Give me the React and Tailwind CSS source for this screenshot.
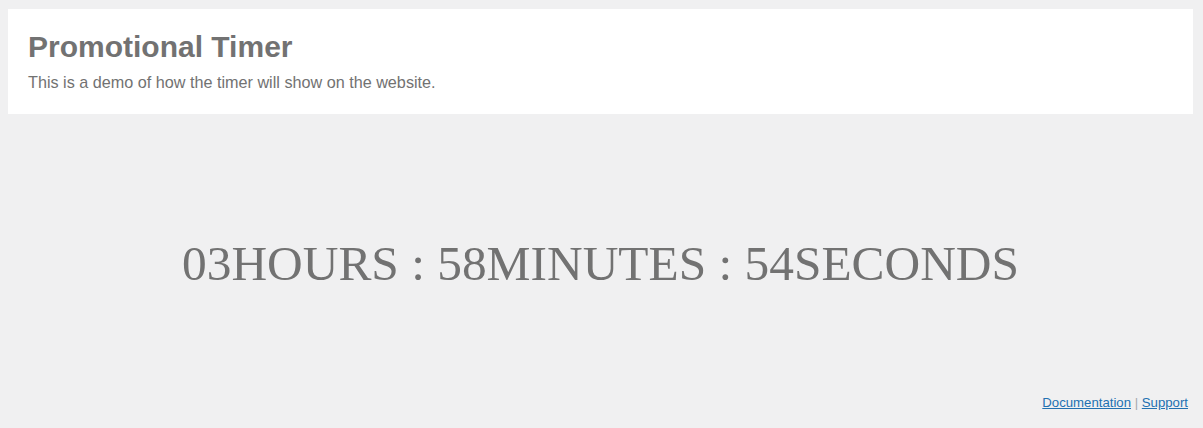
import React from "react";

const Timer = ({ hours, minutes, seconds }) => {
  return (
    <div className="mt-[125px] text-center font-['Liberation_Serif',serif] text-[49.4px] leading-[50px] text-[#727272] whitespace-nowrap">
      {hours}HOURS : {minutes}MINUTES : {seconds}SECONDS
    </div>
  );
};

const App = () => {
  return (
    <div className="min-h-[428px] bg-[#f0f0f1] pt-[9px] pl-2 pr-[10px] font-['Liberation_Sans',Arial,sans-serif]">
      <div className="bg-white px-5 pt-[21px] h-[105px]">
        <h1 className="text-[30px] leading-[34.5px] font-bold text-[#727272]">
          Promotional Timer
        </h1>
        <p className="mt-[5px] text-[16.2px] leading-[24px] text-[#727272]">
          This is a demo of how the timer will show on the website.
        </p>
      </div>
      <Timer hours="03" minutes="58" seconds="54" />
      <div className="mt-[104px] pr-[5px] text-right text-[13.2px] leading-[20px] text-[#a7aaad]">
        <a href="#" className="text-[#2271b1] underline">
          Documentation
        </a>{" "}
        |{" "}
        <a href="#" className="text-[#2271b1] underline">
          Support
        </a>
      </div>
    </div>
  );
};

export default App;
